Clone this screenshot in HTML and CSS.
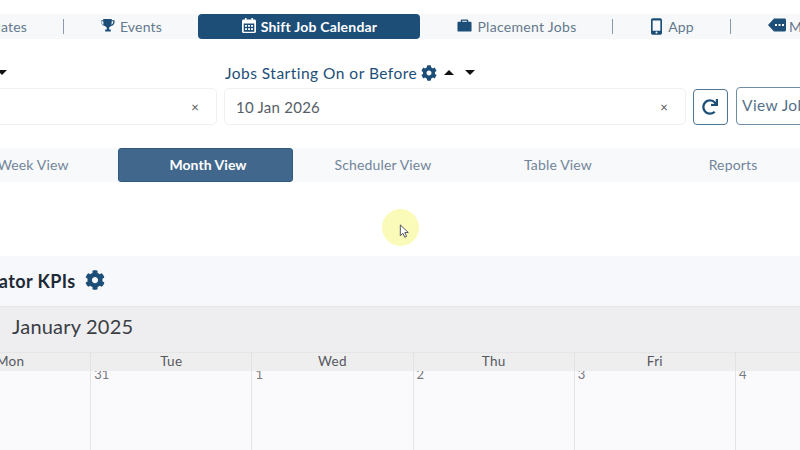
FILE: index.html
```html
<!DOCTYPE html>
<html lang="en">
<head>
<meta charset="utf-8">
<title>Shift Job Calendar</title>
<link rel="stylesheet" href="styles.css">
</head>
<body>
<div class="page">
  <nav class="nav">
    <a class="nav-item w-updates sep"><span>Updates</span></a>
    <a class="nav-item w-events">
      <svg class="ico" viewBox="0 0 16 16"><path d="M3.5 1h9v1.3h3v2.2c0 2.2-1.8 3.8-4 4.1-.5.8-1.1 1.3-1.8 1.6v2h1.8V14.500H5.500V12.200h1.800v-2c-.7-.3-1.300-.8-1.800-1.600-2.200-.3-4-1.900-4-4.100V2.300h2zM1.900 3.500v1c0 1.200.9 2.200 2.100 2.700-.3-1-.5-2.300-.5-3.700zM14.100 3.500h-1.600c0 1.400-.2 2.700-.5 3.700 1.200-.5 2.100-1.500 2.100-2.700z" /></svg>
      <span>Events</span>
    </a>
    <a class="nav-item w-active active">
      <svg class="ico cal" viewBox="0 0 16 16"><path fill-rule="evenodd" d="M4 .5h1.600v1.500h4.800V.5H12V2h1.500c.8 0 1.500.7 1.500 1.500v10.500c0 .8-.7 1.500-1.500 1.500h-11c-.8 0-1.500-.7-1.500-1.500V3.500C1 2.700 1.700 2 2.500 2H4zM2.700 6v8c0 .2.100.3.300.3h10c.2 0 .3-.1.300-.3V6zM4 7.500h2v1.800H4zM7 7.500h2v1.800H7zM10 7.500h2v1.800h-2zM4 10.700h2v1.800H4zM7 10.700h2v1.800H7zM10 10.700h2v1.800h-2z"/></svg>
      <span>Shift Job Calendar</span>
    </a>
    <a class="nav-item w-place sep">
      <svg class="ico" viewBox="0 0 16 16"><path fill-rule="evenodd" d="M5 1.500h6c.6 0 1 .4 1 1V4h2.500c.6 0 1 .4 1 1v8.500c0 .6-.4 1-1 1H1.500c-.6 0-1-.4-1-1V5c0-.6.4-1 1-1H4V2.500c0-.6.4-1 1-1zM5.500 3v1h5V3z"/></svg>
      <span>Placement Jobs</span>
    </a>
    <a class="nav-item w-app sep">
      <svg class="ico tall" viewBox="0 0 12 18"><path fill-rule="evenodd" d="M2 0h8c1.100 0 2 .9 2 2v14c0 1.100-.9 2-2 2H2c-1.100 0-2-.9-2-2V2C0 .9.900 0 2 0zM1.800 2.500v11h8.400v-11zM6 14.500a1.100 1.100 0 1 0 0 2.200 1.100 1.100 0 0 0 0-2.200z"/></svg>
      <span>App</span>
    </a>
    <a class="nav-item w-more">
      <svg class="ico wide" viewBox="0 0 18 14"><path fill-rule="evenodd" d="M6 .5h10.500c.8 0 1.500.7 1.500 1.500v10c0 .8-.7 1.500-1.500 1.500H6L0 7zM7 6v2h2V6zM10.500 6v2h2V6zM14 6v2h2V6z"/></svg>
      <span>More</span>
    </a>
  </nav>

  <section class="filters">
    <div class="field f-first">
      <div class="label"><span class="caret down"></span></div>
      <div class="input"><span class="value"></span><span class="clear">×</span></div>
    </div>
    <div class="field f-second">
      <div class="label">
        <span>Jobs Starting On or Before</span>
        <svg class="gear-sm" viewBox="0 0 512 512"><path d="M487.400 315.700l-42.600-24.600c4.300-23.200 4.300-47 0-70.200l42.600-24.600c4.900-2.800 7.100-8.600 5.500-14-11.100-35.600-30-67.800-54.700-94.600-3.800-4.100-10-5.100-14.800-2.300L380.800 110c-17.900-15.400-38.500-27.300-60.800-35.100V25.800c0-5.600-3.900-10.500-9.400-11.700-36.700-8.200-74.300-7.800-109.200 0-5.500 1.200-9.400 6.100-9.400 11.700V75c-22.200 7.900-42.800 19.800-60.800 35.100L88.700 85.500c-4.900-2.800-11-1.900-14.800 2.300-24.700 26.700-43.600 58.900-54.700 94.600-1.700 5.400.6 11.200 5.500 14L67.300 221c-4.300 23.200-4.300 47 0 70.200l-42.600 24.600c-4.900 2.800-7.100 8.600-5.500 14 11.100 35.600 30 67.800 54.700 94.600 3.800 4.100 10 5.100 14.800 2.300l42.600-24.600c17.900 15.400 38.500 27.300 60.800 35.100v49.200c0 5.600 3.900 10.500 9.400 11.700 36.700 8.200 74.300 7.800 109.200 0 5.500-1.200 9.400-6.100 9.400-11.700v-49.200c22.200-7.900 42.800-19.800 60.800-35.100l42.600 24.600c4.900 2.800 11 1.900 14.800-2.300 24.700-26.700 43.600-58.900 54.700-94.600 1.500-5.500-.7-11.300-5.600-14.100zM256 336c-44.100 0-80-35.900-80-80s35.900-80 80-80 80 35.900 80 80-35.900 80-80 80z"/></svg>
        <span class="caret up"></span>
        <span class="caret down"></span>
      </div>
      <div class="input"><span class="value">10 Jan 2026</span><span class="clear">×</span></div>
    </div>
    <button class="btn-refresh" type="button" aria-label="Refresh">
      <svg viewBox="0 0 512 512"><path d="M500.330 0h-47.410a12 12 0 0 0-12 12.570l4 82.760A247.420 247.420 0 0 0 256 8C119.340 8 8.020 119.530 8 256.190 7.980 393.100 119.100 504 256 504a247.100 247.100 0 0 0 166.180-63.910 12 12 0 0 0 .48-17.430l-34-34a12 12 0 0 0-16.380-.55A176 176 0 1 1 402.100 157.800l-101.530-4.870a12 12 0 0 0-12.570 12v47.410a12 12 0 0 0 12 12h200.330a12 12 0 0 0 12-12V12a12 12 0 0 0-12-12z"/></svg>
    </button>
    <button class="btn-view" type="button">View Jobs</button>
  </section>

  <div class="tabs">
    <a class="tab">Week View</a>
    <a class="tab active">Month View</a>
    <a class="tab">Scheduler View</a>
    <a class="tab">Table View</a>
    <a class="tab">Reports</a>
  </div>

  <section class="kpis">
    <h2>Indicator KPIs</h2>
    <svg class="gear" viewBox="0 0 512 512"><path d="M487.400 315.700l-42.600-24.600c4.300-23.200 4.300-47 0-70.200l42.600-24.600c4.900-2.800 7.100-8.600 5.500-14-11.100-35.600-30-67.800-54.700-94.600-3.800-4.100-10-5.100-14.800-2.300L380.800 110c-17.900-15.400-38.500-27.300-60.800-35.100V25.800c0-5.600-3.900-10.500-9.400-11.700-36.700-8.200-74.300-7.800-109.200 0-5.500 1.200-9.400 6.100-9.400 11.700V75c-22.200 7.900-42.800 19.800-60.800 35.100L88.700 85.500c-4.900-2.800-11-1.900-14.800 2.300-24.700 26.700-43.600 58.900-54.700 94.600-1.700 5.400.6 11.200 5.500 14L67.300 221c-4.300 23.200-4.300 47 0 70.200l-42.600 24.600c-4.900 2.800-7.100 8.600-5.500 14 11.100 35.600 30 67.800 54.700 94.600 3.800 4.100 10 5.100 14.800 2.300l42.600-24.600c17.900 15.400 38.500 27.300 60.800 35.100v49.200c0 5.600 3.900 10.500 9.400 11.700 36.700 8.200 74.300 7.800 109.200 0 5.500-1.200 9.400-6.100 9.400-11.700v-49.200c22.200-7.900 42.800-19.800 60.800-35.100l42.600 24.600c4.900 2.800 11 1.900 14.800-2.300 24.700-26.700 43.600-58.900 54.700-94.600 1.500-5.500-.7-11.300-5.600-14.100zM256 336c-44.100 0-80-35.900-80-80s35.900-80 80-80 80 35.900 80 80-35.900 80-80 80z"/></svg>
  </section>

  <section class="calendar">
    <div class="cal-title">January 2025</div>
    <div class="cal-grid heads">
      <div class="head">Mon</div><div class="head">Tue</div><div class="head">Wed</div><div class="head">Thu</div><div class="head">Fri</div><div class="head">Sat</div>
    </div>
    <div class="cal-grid days">
      <div class="day"></div><div class="day">31</div><div class="day">1</div><div class="day">2</div><div class="day">3</div><div class="day">4</div>
    </div>
  </section>

  <div class="cursor-halo">
    <svg viewBox="0 0 12 16"><path d="M1 1v11.500l2.800-2.600 1.900 4.300 2-.9-1.900-4.200h3.700z" fill="#fff" stroke="#454b5c" stroke-width="1"/></svg>
  </div>
</div>
</body>
</html>
```

FILE: styles.css
```css
* { box-sizing: border-box; }
html, body { margin: 0; padding: 0; background: #fff; }
.page {
  position: relative;
  width: 800px;
  height: 450px;
  overflow: hidden;
  padding-top: 14px;
  font-family: "Lato", "Open Sans", sans-serif;
  color: #5f7488;
}

/* top nav */
.nav {
  display: flex;
  height: 25px;
  width: 1000px;
  margin-left: -60px;
  background: #f6f8fa;
  font-size: 14px;
  letter-spacing: .2px;
}
.nav-item { display: flex; align-items: center; justify-content: center; gap: 5px; position: relative; color: #64798d; flex: none; }
.ico { width: 15px; height: 15px; fill: #1c4e78; }
.ico.cal { width: 16px; height: 17px; margin-right: -1px; margin-top: -2px; }
.ico.tall { width: 11px; height: 17px; margin-right: 1px; margin-top: -1px; }
.ico.wide { width: 18px; height: 14px; margin-right: -2px; margin-top: -3px; }
.sep::after { content: ""; position: absolute; right: 0; top: 5px; height: 15px; width: 1px; background: #8b9aa8; }
.w-updates { width: 124px; justify-content: flex-end; padding-right: 37px; }
.w-events { width: 134px; padding-left: 0; }
.w-events .ico { margin-top: -3px; }
.w-active { width: 222px; background: #1c4e78; color: #fff; font-weight: 700; border-radius: 4px; }
.w-active .ico { fill: #fff; }
.w-place { width: 193px; padding-left: 1px; letter-spacing: .3px; }
.w-place .ico { margin-top: -3px; }
.w-app { width: 118px; padding-left: 1px; }
.w-more { width: 120px; justify-content: flex-start; padding-left: 37px; }

/* filters */
.filters {
  display: flex;
  align-items: flex-end;
  width: 1000px;
  margin-left: -100px;
  margin-top: 25px;
  height: 61px;
}
.field { display: flex; flex-direction: column; flex: none; }
.f-first { width: 317px; margin-right: 7px; }
.f-second { width: 462px; margin-right: 7px; }
.label { height: 24px; display: flex; align-items: flex-start; gap: 4px; color: #1c4e78; font-size: 15.500px; letter-spacing: .48px; padding-left: 1px; line-height: 18px; }
.f-first .label { justify-content: flex-end; padding-right: 210px; }
.input {
  height: 37px;
  display: flex;
  align-items: center;
  justify-content: space-between;
  border: 1px solid #eef0f2;
  border-radius: 5px;
  padding: 0 17px 0 11px;
  font-size: 15px;
  letter-spacing: .25px;
  color: #555d66;
}
.clear { font-size: 13px; color: #555; }
.caret { width: 0; height: 0; border-left: 5px solid transparent; border-right: 5px solid transparent; margin-top: 6px; }
.caret.down { border-top: 5px solid #111; }
.caret.up { border-bottom: 5px solid #111; margin-left: 3px; margin-right: 7px; }
.gear-sm { width: 16px; height: 16px; fill: #1c4e78; margin-top: 1px; }
.btn-refresh {
  flex: none;
  width: 35px;
  height: 36px;
  margin: 0 8px 0 0;
  padding: 0 1px 0 0;
  display: flex;
  align-items: center;
  justify-content: center;
  background: #fff;
  border: 1px solid #4f7594;
  border-radius: 4px;
}
.btn-refresh svg { width: 16px; height: 16px; fill: #1c4e78; }
.btn-view {
  flex: none;
  width: 100px;
  height: 38px;
  padding: 0 0 2px 5px;
  text-align: left;
  background: #fff;
  border: 1px solid #6f8ca5;
  border-radius: 4px;
  font: 400 15.500px "Lato", sans-serif;
  letter-spacing: .4px;
  color: #547089;
}

/* tabs */
.tabs {
  display: flex;
  width: 1000px;
  height: 34px;
  margin-top: 23px;
  margin-left: -57px;
  background: #f7f9fb;
  font-size: 14px;
  letter-spacing: .15px;
}
.tab { flex: none; width: 175px; display: flex; align-items: center; justify-content: center; color: #72859a; padding: 0 0 1px 5px; }
.tab.active { background: #41688c; color: #fff; font-weight: 700; letter-spacing: .05px; border: 1px solid #2f5a80; border-radius: 3px; padding-left: 5px; }

/* kpi band */
.kpis {
  display: flex;
  align-items: center;
  gap: 9px;
  width: 800px;
  height: 51px;
  margin-top: 74px;
  background: #f6f8fb;
  border-bottom: 1px solid #e4e6ea;
}
.kpis h2 { margin: 0 0 0 -42px; font-size: 18px; font-weight: 700; letter-spacing: .4px; color: #1f2a37; white-space: nowrap; }
.gear { width: 20px; height: 20px; fill: #1c4e78; margin-top: -2px; }

/* calendar */
.calendar { background: #faf9fb; height: 143px; }
.cal-title { height: 45px; display: flex; align-items: center; padding: 0 0 7px 12px; background: #eeedef; font-size: 20px; letter-spacing: .2px; color: #3a3d44; }
.cal-grid { display: grid; grid-template-columns: repeat(6, 161.200px); margin-left: -70px; width: 1000px; }
.heads { background: #efeeef; height: 19px; border-top: 1px solid #e6e5e7; }
.head { text-align: center; font-size: 13.500px; line-height: 17px; letter-spacing: .3px; color: #55585f; border-right: 1px solid #e2e1e3; }
.days { height: 79px; }
.day { border-right: 1px solid #e4e3e5; font-size: 13px; line-height: 6px; padding: 0 0 0 3px; color: #77797f; white-space: nowrap; overflow: hidden; }

/* recording cursor highlight */
.cursor-halo {
  position: absolute;
  left: 382px;
  top: 209px;
  width: 37px;
  height: 37px;
  border-radius: 50%;
  background: #fbfbb9;
}
.cursor-halo svg { position: absolute; left: 17px; top: 15px; width: 12px; height: 15px; }
```
